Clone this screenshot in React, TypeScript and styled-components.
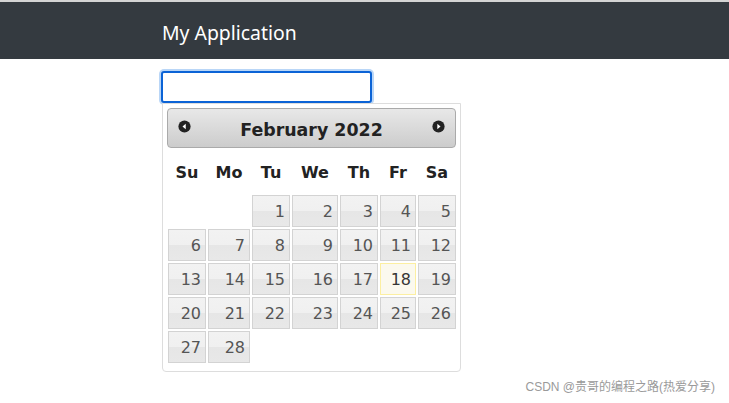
import React from "react";
import styled, { createGlobalStyle, css } from "styled-components";

const GlobalStyle = createGlobalStyle`
	html, body {
		margin: 0;
		padding: 0;
		background: #fff;
	}
	body {
		font-family: "Noto Sans", "Liberation Sans", sans-serif;
		border-top: 2px solid #d4d4d4;
		min-height: 401px;
		position: relative;
	}
`;

const Navbar = styled.header`
	background-color: #343a40;
	height: 57px;
	display: flex;
	align-items: center;
`;

const Container = styled.div`
	max-width: 405px;
	margin: 0 auto;
	width: 100%;
	position: relative;
`;

const Brand = styled.span`
	color: #fff;
	font-family: "Noto Sans", sans-serif;
	font-size: 19.4px;
	display: block;
	margin-top: 4px;
`;

const Main = styled.main`
	padding-top: 12px;
`;

const Field = styled.div`
	position: relative;
	margin-left: -1px;
`;

const DateInput = styled.input`
	display: block;
	width: 211px;
	height: 32px;
	box-sizing: border-box;
	border: 2px solid #0b63d6;
	border-radius: 3px;
	outline: none;
	box-shadow: 0 0 0 2px #b9d6f7;
	font-size: 16px;
	padding: 0 8px;
`;

const Picker = styled.div`
	position: absolute;
	top: 32px;
	left: 1px;
	width: 299px;
	box-sizing: border-box;
	padding: 4px 4px 8px 4px;
	border: 1px solid #dddddd;
	border-radius: 0 0 4px 4px;
	background: #fff;
	font-family: "DejaVu Sans", Verdana, sans-serif;
	color: #222;
`;

const Header = styled.div`
	height: 40px;
	box-sizing: border-box;
	border: 1px solid #aaaaaa;
	border-radius: 4px;
	background: linear-gradient(#e8e8e8, #cccccc);
	display: flex;
	align-items: center;
	justify-content: space-between;
	padding: 0 10px;
`;

const Title = styled.div`
	font-weight: bold;
	font-size: 17.4px;
	color: #222;
	padding-top: 3px;
`;

const NavIcon = styled.svg`
	width: 13px;
	height: 13px;
	display: block;
	margin-top: -3px;
`;

const Grid = styled.div`
	display: grid;
	grid-template-columns: 38px 42px 38px 46px 38px 36px 38px;
	column-gap: 2px;
	row-gap: 2px;
	margin-left: 1px;
	font-size: 16px;
`;

const DayName = styled.div`
	height: 45px;
	box-sizing: border-box;
	padding-top: 4px;
	display: flex;
	align-items: center;
	justify-content: center;
	font-weight: bold;
	color: #222;
	font-size: 16px;
`;

const Cell = styled.div<{ $today?: boolean }>`
	height: 32px;
	box-sizing: border-box;
	border: 1px solid #d3d3d3;
	background: linear-gradient(#f2f2f2 0%, #f0f0f0 50%, #e6e6e6 51%, #e8e8e8 100%);
	color: #555;
	display: flex;
	align-items: center;
	justify-content: flex-end;
	padding: 1px 4px 0 0;
	${(p) =>
		p.$today &&
		css`
			border-color: #fcefa1;
			background: #fbf9ee;
			color: #363636;
		`}
`;

const Empty = styled.div``;

const Credit = styled.div`
	position: absolute;
	right: 14px;
	bottom: 9px;
	font-size: 12px;
	color: #9a9a9a;
	font-family: "Liberation Sans", "Noto Sans CJK SC", sans-serif;
`;

const days = ["Su", "Mo", "Tu", "We", "Th", "Fr", "Sa"];

const Arrow = ({ dir }: { dir: "prev" | "next" }) => (
	<NavIcon viewBox="0 0 16 16">
		<circle cx="8" cy="8" r="7.5" fill="#222" />
		{dir === "prev" ? (
			<polygon points="9.5,4.5 5.5,8 9.5,11.5" fill="#fff" />
		) : (
			<polygon points="6.5,4.5 10.5,8 6.5,11.5" fill="#fff" />
		)}
	</NavIcon>
);

export default function App() {
	const offset = 2;
	const total = 28;
	const cells: (number | null)[] = [];
	for (let i = 0; i < offset; i++) cells.push(null);
	for (let d = 1; d <= total; d++) cells.push(d);

	return (
		<>
			<GlobalStyle />
			<Navbar>
				<Container>
					<Brand>My Application</Brand>
				</Container>
			</Navbar>
			<Main>
				<Container>
					<Field>
						<DateInput type="text" />
						<Picker>
							<Header>
								<Arrow dir="prev" />
								<Title>February 2022</Title>
								<Arrow dir="next" />
							</Header>
							<Grid>
								{days.map((d) => (
									<DayName key={d}>{d}</DayName>
								))}
								{cells.map((c, i) =>
									c === null ? (
										<Empty key={"e" + i} />
									) : (
										<Cell key={c} $today={c === 18}>
											{c}
										</Cell>
									)
								)}
							</Grid>
						</Picker>
					</Field>
				</Container>
			</Main>
			<Credit>CSDN @贵哥的编程之路(热爱分享)</Credit>
		</>
	);
}
